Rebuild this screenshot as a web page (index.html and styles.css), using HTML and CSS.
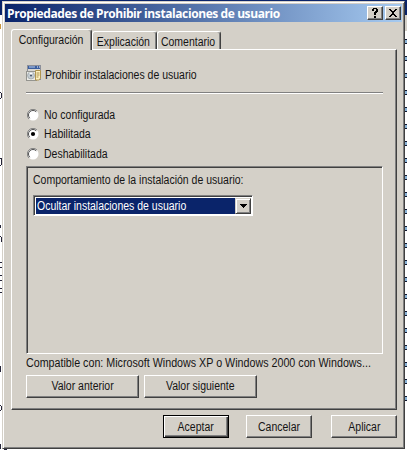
FILE: index.html
```html
<!DOCTYPE html>
<html lang="es">
<head>
<meta charset="utf-8">
<title>Propiedades</title>
<link rel="stylesheet" href="styles.css">
</head>
<body>
<div class="desktop" aria-hidden="true">
  <svg width="407" height="450" shape-rendering="crispEdges">
    <defs><pattern id="ticks" x="404" y="38" width="3" height="17" patternUnits="userSpaceOnUse"><rect x="1" y="1" width="2" height="1" fill="#111830"/><rect x="1" y="2" width="2" height="3" fill="#8ab4d8"/><rect x="1" y="5" width="2" height="1" fill="#111830"/></pattern></defs>
    <rect width="407" height="450" fill="#fff"/>
    <rect width="407" height="15" fill="#0a246a"/>
    <rect x="404" y="15" width="3" height="16" fill="#d4d0c8"/>
    <rect x="404" y="38" width="3" height="370" fill="url(#ticks)"/>
    <path d="M0 24h1v5h-1zM0 225h1v3h-1z" fill="#c89640"/>
    <path d="M0 92h1v1h-1zM1 93h1v5h-1zM0 98h1v1h-1zM0 158h2v1h-2zM1 159h1v6h-1zM0 165h1v1h-1zM0 225h1v3h-1zM0 236h1v1h1v5h-1v-5h-1zM0 262h2v1h-2zM0 267h2v1h-2zM0 275h2v1h-2zM0 280h2v1h-2zM0 288h2v1h-2zM0 292h2v1h-2zM0 366h1v6h-1zM0 405h1v1h-1zM1 406h1v4h-1zM0 410h1v1h-1zM0 444h1v5h-1zM4 449h3v1h-3z" fill="#242438"/>
  </svg>
</div>
<main class="dialog">
  <header class="titlebar">
    <span class="title">Propiedades de Prohibir instalaciones de usuario</span>
    <span class="caption-btn"><svg width="10" height="10" viewBox="0 0 10 10" shape-rendering="crispEdges"><path d="M3 0h4v1h1v3h-1v1h-1v2h-2v-3h1v-1h1v-2h-2v2h-2v-2h1zM4 8h2v2h-2z"/></svg></span>
    <span class="caption-btn close"><svg width="8" height="8" viewBox="0 0 8 8" shape-rendering="crispEdges"><path d="M0 0h2v1h1v1h2v-1h1v-1h2v1h-1v1h-1v1h-1v2h1v1h1v1h1v1h-2v-1h-1v-1h-2v1h-1v1h-2v-1h1v-1h1v-1h1v-2h-1v-1h-1v-1h-1z"/></svg></span>
  </header>
  <nav class="tabs">
    <span class="tab active"><span class="text">Configuración</span></span>
    <span class="tab"><span class="text">Explicación</span></span>
    <span class="tab last"><span class="text">Comentario</span></span>
  </nav>
  <section class="panel">
    <div class="heading">
      <svg width="16" height="16" viewBox="0 0 16 16">
        <rect x="1.500" y=".5" width="13" height="14" fill="#d9d7d2" stroke="#8c8f99"/>
        <rect x="2" y="1" width="12" height="3" fill="#3b5f9f"/>
        <path d="M3 2h6" stroke="#bfd0ec"/><path d="M11 2h1M13 2h1" stroke="#fff"/>
        <rect x=".5" y="6.500" width="10" height="9" fill="#ecece8" stroke="#94948f"/>
        <circle cx="5" cy="10.500" r="3.500" fill="#c3cbd0" stroke="#8e979c" stroke-width=".6"/>
        <path d="M5 10.500L3 7.500h4z" fill="#fff"/><circle cx="5" cy="10.500" r="1" fill="#425064"/>
        <path d="M9.500 5.500h5v8l-2 1.500h-3z" fill="#fff3c2" stroke="#b09550"/>
        <path d="M10.500 8h3M10.500 10h3M10.500 12h2" stroke="#a68a4a"/>
      </svg>
      <span class="text">Prohibir instalaciones de usuario</span>
    </div>
    <div class="rule"></div>
    <div class="options">
      <label class="option"><svg width="12" height="12" viewBox="0 0 12 12"><circle cx="6" cy="6" r="5.500" fill="#fff"/><path d="M2 10A5.500 5.500 0 0 1 10 2" fill="none" stroke="#808080"/><path d="M2.800 9.200A4.500 4.500 0 0 1 9.200 2.800" fill="none" stroke="#505050"/></svg><span class="text">No configurada</span></label>
      <label class="option"><svg width="12" height="12" viewBox="0 0 12 12"><circle cx="6" cy="6" r="5.500" fill="#fff"/><path d="M2 10A5.500 5.500 0 0 1 10 2" fill="none" stroke="#808080"/><path d="M2.800 9.200A4.500 4.500 0 0 1 9.200 2.800" fill="none" stroke="#505050"/><circle cx="6" cy="6" r="2.100"/></svg><span class="text">Habilitada</span></label>
      <label class="option"><svg width="12" height="12" viewBox="0 0 12 12"><circle cx="6" cy="6" r="5.500" fill="#fff"/><path d="M2 10A5.500 5.500 0 0 1 10 2" fill="none" stroke="#808080"/><path d="M2.800 9.200A4.500 4.500 0 0 1 9.200 2.800" fill="none" stroke="#505050"/></svg><span class="text">Deshabilitada</span></label>
    </div>
    <div class="group">
      <div class="group-label"><span class="text">Comportamiento de la instalación de usuario:</span></div>
      <div class="combo">
        <div class="value"><span class="text">Ocultar instalaciones de usuario</span></div>
        <span class="arrow"><svg width="7" height="4" viewBox="0 0 7 4" shape-rendering="crispEdges"><path d="M0 0h7v1h-1v1h-1v1h-1v1h-1v-1h-1v-1h-1v-1h-1z"/></svg></span>
      </div>
    </div>
    <div class="support"><span class="text">Compatible con: Microsoft Windows XP o Windows 2000 con Windows...</span></div>
    <div class="nav-buttons">
      <span class="btn wide"><span class="text">Valor anterior</span></span>
      <span class="btn wide"><span class="text">Valor siguiente</span></span>
    </div>
  </section>
  <footer class="actions">
    <span class="btn default"><span class="text">Aceptar</span></span>
    <span class="btn cancel"><span class="text">Cancelar</span></span>
    <span class="btn"><span class="text">Aplicar</span></span>
  </footer>
</main>
</body>
</html>
```
FILE: styles.css
```css
* { box-sizing: border-box; }
body { margin: 0; width: 407px; height: 450px; overflow: hidden; padding: 1px 0 0 2px; font: 12px/14px "Liberation Sans", Arial, sans-serif; color: #141414; }
svg { display: block; flex: none; }
span { white-space: nowrap; }
.text { display: inline-block; transform: scaleX(.874); transform-origin: left; }
.tab .text, .btn .text { transform-origin: center; }
.desktop { position: absolute; left: 0; top: 0; z-index: -1; }
.dialog { width: 403px; height: 448px; background: #d4d0c8; border: 1px solid; border-color: #d4d0c8 #404040 #404040 #d4d0c8; box-shadow: inset 1px 1px #fff, inset -1px -1px #808080; padding: 2px; }
.titlebar { height: 18px; display: flex; align-items: center; padding: 0 1px 0 2px; background: linear-gradient(90deg, #0a246a, #a6caf0); }
.title { flex: 1; font: bold 12px/16px "Open Sans", "Noto Sans", sans-serif; color: #fff; letter-spacing: -.41px; padding-top: 1px; }
.caption-btn { width: 16px; height: 14px; display: flex; align-items: center; justify-content: center; background: #d4d0c8; border: 1px solid; border-color: #fff #404040 #404040 #fff; box-shadow: inset -1px -1px #808080; }
.close { margin-left: 2px; }
.tabs { display: flex; align-items: flex-end; height: 28px; padding-left: 6px; position: relative; z-index: 1; }
.tab { height: 18px; width: 65px; margin-bottom: 1px; padding: 2px 3px 0 0; display: flex; align-items: center; justify-content: center; border: 1px solid #fff; border-right-color: #404040; border-bottom: 0; border-radius: 3px 3px 0 0; box-shadow: inset -1px 0 #808080; }
.active { width: 81px; height: 21px; margin-bottom: 0; background: #d4d0c8; padding: 0 1px 1px 0; }
.last { width: 64px; padding-right: 1px; }
.panel { width: 386px; height: 361px; margin: -1px 0 0 6px; border: 1px solid; border-color: #fff #404040 #404040 #fff; box-shadow: inset -1px -1px #808080; padding: 14px 12px 0 14px; }
.heading { display: flex; gap: 3px; align-items: center; height: 18px; }
.heading .text { padding-top: 4px; }
.rule { width: 357px; height: 2px; margin-top: 10px; background: #808080; border-bottom: 1px solid #fff; }
.options { padding-top: 11px; }
.option { display: flex; align-items: center; gap: 5px; height: 19.500px; padding-left: 1px; }
.group { width: 357px; height: 188px; margin-top: 2px; border: 1px solid; border-color: #808080 #fff #fff #808080; box-shadow: inset 1px 1px #404040; padding: 6px 6px 0 6px; }
.combo { width: 220px; height: 21px; margin-top: 8px; display: flex; border: 1px solid; border-color: #808080 #fff #fff #808080; box-shadow: inset 1px 1px #404040; padding: 2px 1px 1px 2px; background: #fff; }
.value { flex: 1; background: #0a246a; color: #fff; display: flex; align-items: center; padding-left: 1px; }
.arrow { width: 16px; display: flex; align-items: center; justify-content: center; background: #d4d0c8; border: 1px solid; border-color: #d4d0c8 #404040 #404040 #d4d0c8; box-shadow: inset 1px 1px #fff, inset -1px -1px #808080; }
.support { width: 358px; height: 14px; margin-top: 2px; }
.support .text { transform: scaleX(.892); }
.nav-buttons { display: flex; gap: 5px; margin-top: 5px; }
.btn { width: 66px; height: 23px; display: flex; align-items: center; justify-content: center; border: 1px solid; border-color: #fff #404040 #404040 #fff; box-shadow: inset -1px -1px #808080; }
.wide { width: 113px; }
.actions { display: flex; justify-content: flex-end; margin: 5px 5px 0 0; }
.default { border-color: #000; box-shadow: inset 1px 1px #fff, inset -1px -1px #404040, inset -2px -2px #808080; }
.cancel { margin: 0 19px 0 17px; }
```
